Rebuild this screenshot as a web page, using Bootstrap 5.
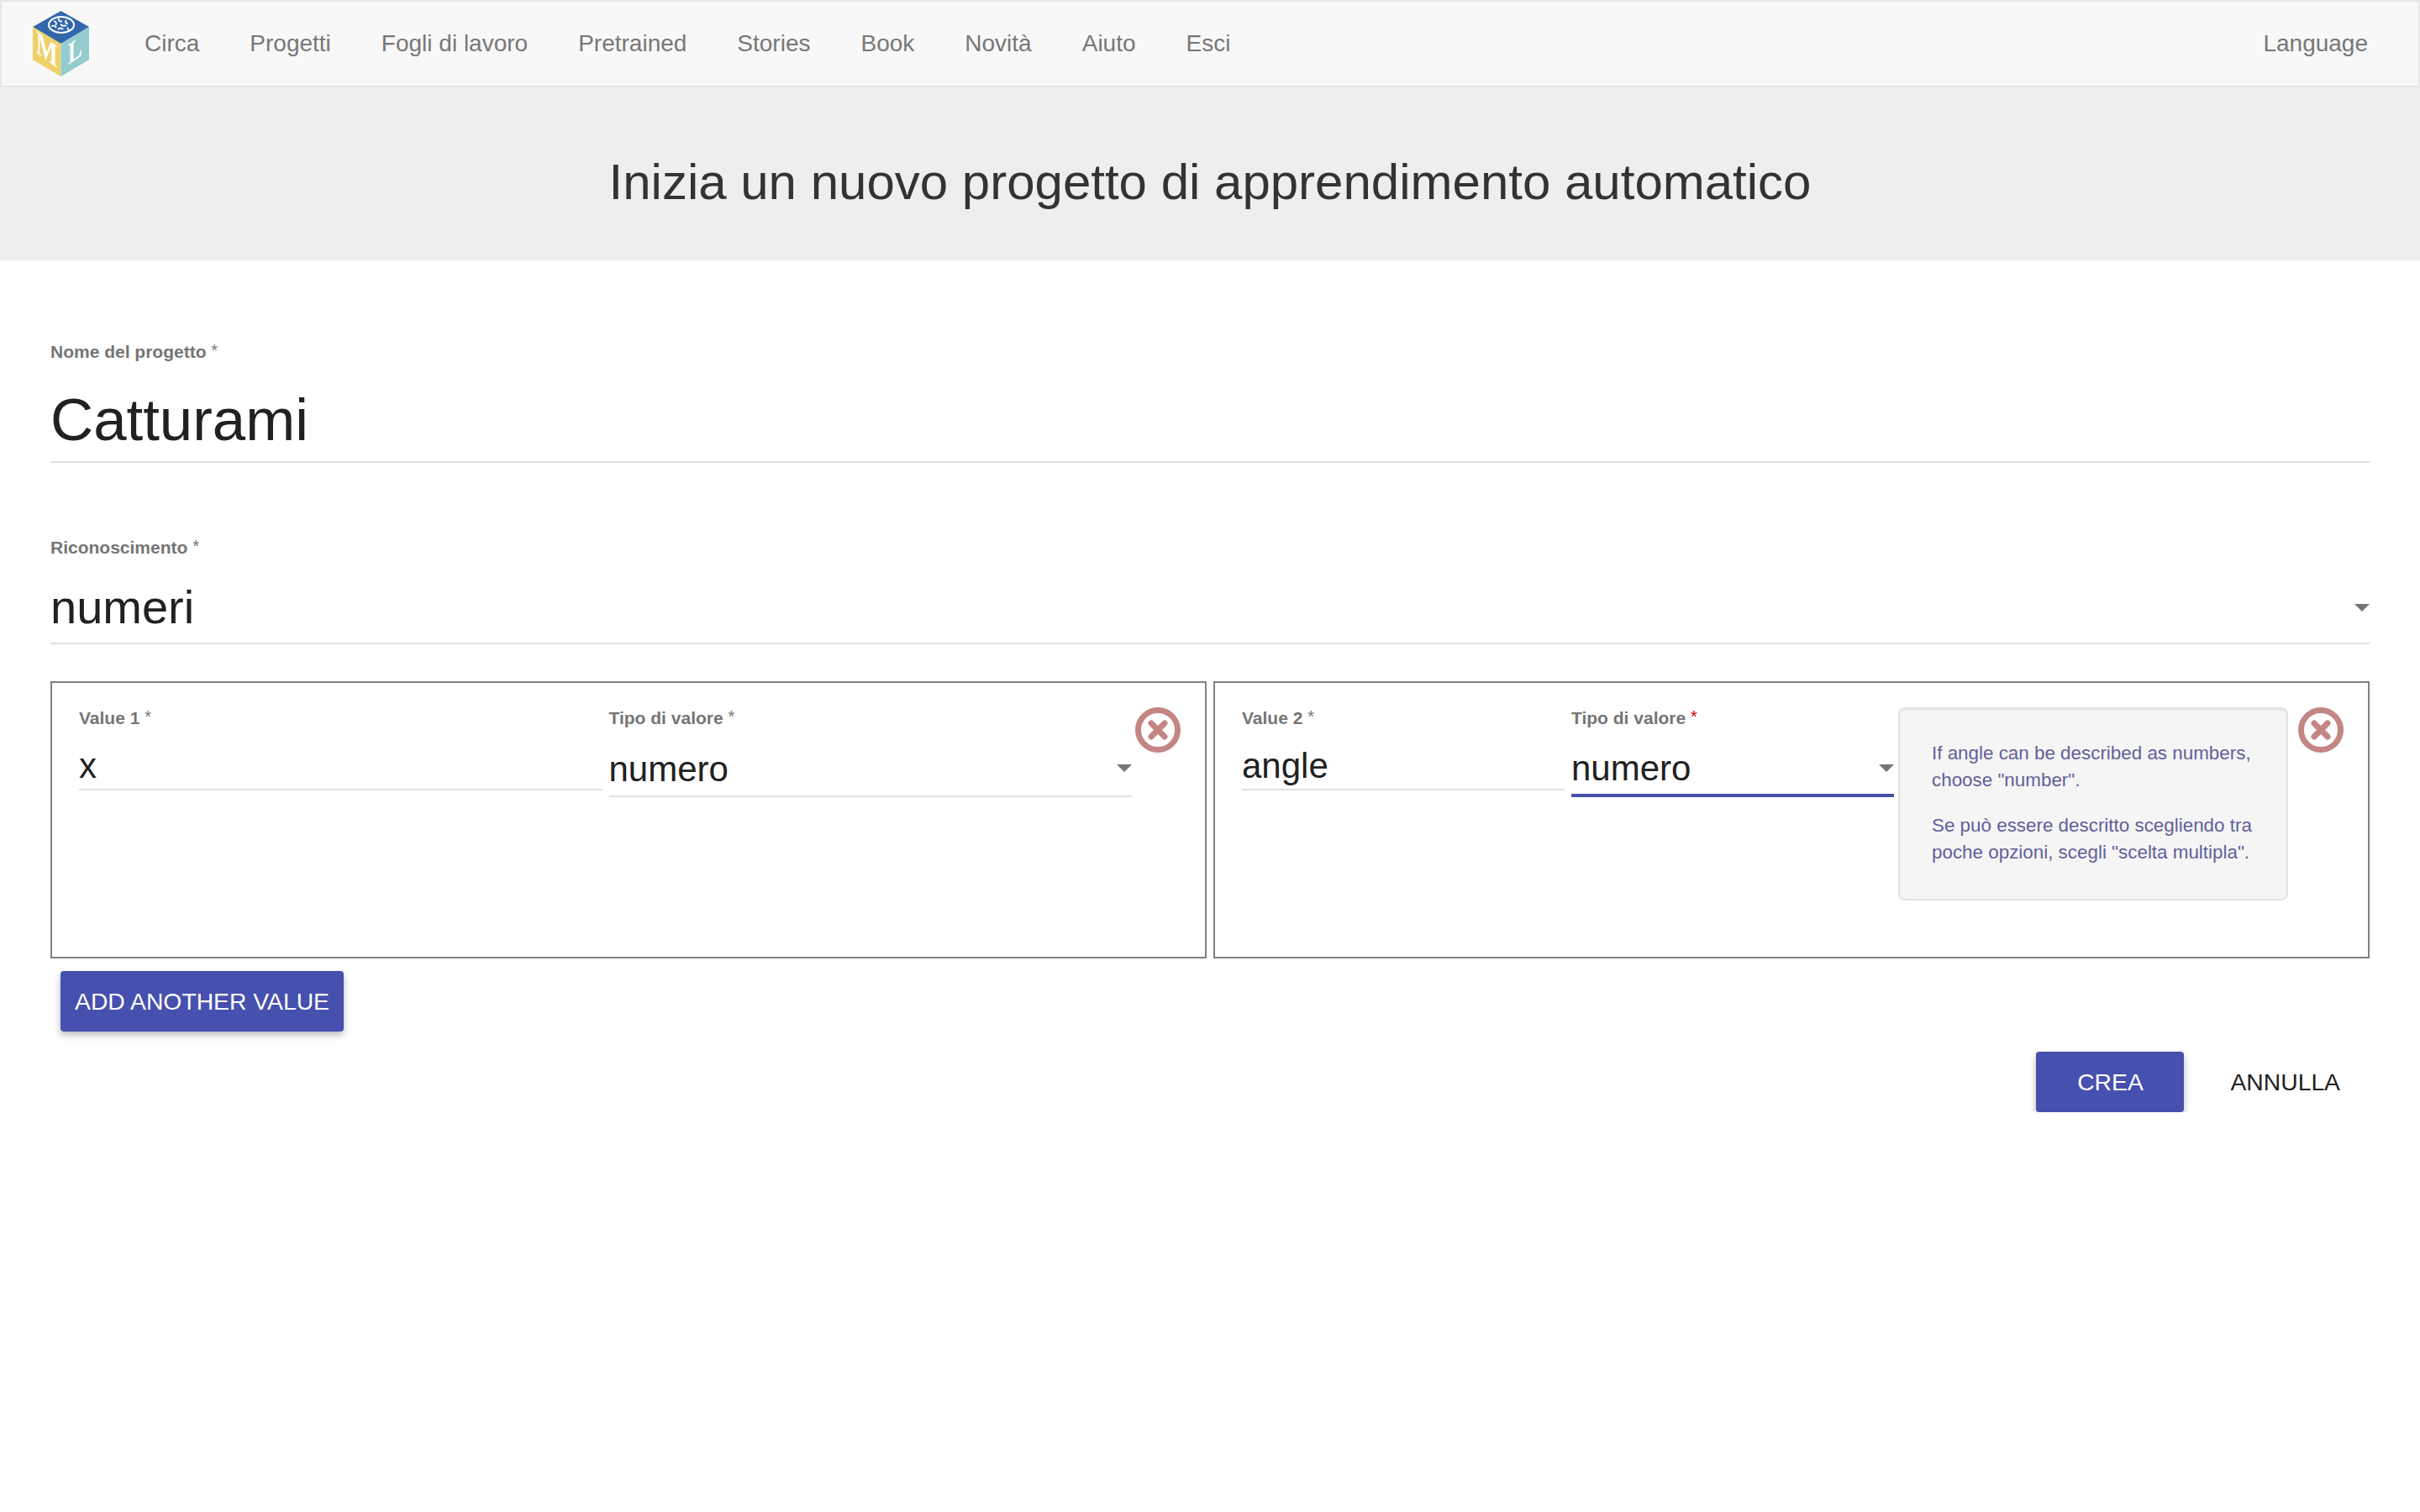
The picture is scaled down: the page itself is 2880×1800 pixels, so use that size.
<!DOCTYPE html>
<html lang="it">
<head>
  <meta charset="UTF-8" />
  <meta name="viewport" content="width=device-width, initial-scale=1.0"/>
  <title>Inizia un nuovo progetto</title>
  <link href="https://cdn.jsdelivr.net/npm/bootstrap@5.3.2/dist/css/bootstrap.min.css" rel="stylesheet"/>
  <style>
    body {
      font-family: "Liberation Sans", Arial, sans-serif;
      color: #212121;
      background: #fff;
    }
    .top-nav {
      background: #f8f8f8;
      border: 2px solid #e7e7e7;
      height: 104px;
      padding: 0 30px 0 37px;
    }
    .top-nav .navbar-brand { padding: 0; margin: 0 36px 0 0; line-height: 0; }
    .top-nav .nav-link {
      font-size: 28px;
      line-height: 40px;
      color: #777;
      padding: 0 30px !important;
    }
    .hero {
      background: #eee;
      height: 206px;
      padding-top: 20px;
    }
    .hero h1 {
      font-size: 60px;
      font-weight: 400;
      color: #333;
      margin: 0;
    }
    .form-area { padding: 96px 60px 0; }
    .fld-label {
      display: block;
      font-size: 21px;
      line-height: 26px;
      font-weight: 700;
      color: #757575;
      margin: 0;
    }
    .fld-label sup { font-size: 20px; top: -2px; vertical-align: baseline; position: relative; font-weight: 400; }
    .req-on sup { color: #d50000; }
    .fld-input, .fld-select {
      border: 0;
      border-bottom: 2px solid #e0e0e0;
      border-radius: 0;
      background: transparent;
      box-shadow: none;
      padding: 0;
      color: #212121;
      width: 100%;
      display: block;
    }
    .fld-big { font-size: 70.8px; height: 101px; margin-top: 18px; line-height: 90px; }
    .fld-main { font-size: 56px; height: 86px; }
    .fld-mid { font-size: 42px; height: 58px; margin-top: 15px; }
    .fld-sel-mid { font-size: 42px; height: 66px; }
    .fld-select { appearance: none; }
    .fld-focus { border-bottom: 4px solid #4650ae; }
    .sel-wrap { position: relative; }
    .sel-wrap-main { margin-top: 16px; }
    .sel-wrap-mid { margin-top: 15px; }
    .sel-arrow {
      position: absolute;
      right: 0;
      width: 0;
      height: 0;
      border-left: 9px solid transparent;
      border-right: 9px solid transparent;
      border-top: 9px solid #757575;
      pointer-events: none;
    }
    .sel-arrow-main { top: 38px; }
    .sel-arrow-mid { top: 27px; }
    .label-gap { margin-top: 88px; }
    .value-row { gap: 8px; margin-top: 44px; }
    .value-box {
      flex: 1 1 0;
      height: 330px;
      border: 2px solid #808080;
      padding: 29px 29px 0 32px;
      min-width: 0;
    }
    .value-fields { flex: 1 1 0; min-width: 0; gap: 8px; }
    .value-field { flex: 1 1 0; min-width: 0; }
    .hint-panel {
      width: 464px;
      height: 230px;
      flex: none;
      margin-left: 5px;
      background: #f5f5f5;
      border: 2px solid #e3e3e3;
      border-radius: 8px;
      box-shadow: inset 0 2px 2px rgba(0,0,0,.05);
      padding: 37px 30px 37px 38px;
      font-size: 22.4px;
      line-height: 32px;
      color: #625f99;
    }
    .hint-panel p { margin: 0 0 22px; }
    .close-btn {
      flex: none;
      width: 54px;
      height: 54px;
      padding: 0;
      border: 0;
      background: none;
      line-height: 0;
    }
    .close-last { margin-left: 12px; }
    .btn-indigo {
      background: #4650ae;
      color: #fff;
      border: 0;
      border-radius: 4px;
      height: 72px;
      font-size: 28.3px;
      box-shadow: 0 4px 8px rgba(0,0,0,.28);
    }
    .btn-indigo:hover { background: #3f479c; color: #fff; }
    .btn-add { width: 337px; margin: 15px 0 0 12px; padding: 0; }
    .btn-create { width: 176px; padding: 0; }
    .action-row { margin-top: 24px; }
    .btn-cancel {
      background: none;
      border: 0;
      color: #212121;
      height: 72px;
      font-size: 28.3px;
      padding: 0 35px 0 33px;
      margin-left: 22px;
    }
  </style>
</head>
<body>
  <!-- top bar -->
  <nav class="navbar navbar-expand top-nav">
    <a class="navbar-brand" href="#">
      <svg width="67" height="78" viewBox="0 0 67 78">
        <polygon points="33.5,0 67,19 33.5,39 0,19" fill="#3366aa"/>
        <polygon points="0,19 33.5,39 33.5,78 0,58" fill="#f0d068"/>
        <polygon points="67,19 33.5,39 33.5,78 67,58" fill="#94cbcf"/>
        <g fill="none" stroke="#fff">
          <ellipse cx="34" cy="16.5" rx="15" ry="9.5" stroke-width="2"/>
          <path d="M25 12c3 1 4 3 2 5M31 9c-1 3 2 4 4 3M40 11c-2 2-1 4 2 4M22 18c3-1 5 0 6 2M33 16c2 2 5 2 7 1M30 22c2-2 4-2 6 0M41 20c1 1 2 2 1 3" stroke-width="1.8"/>
        </g>
        <text transform="matrix(.8 .6 0 1.15 4 49)" font-family="Liberation Serif" font-weight="700" font-size="34" fill="#fff">M</text>
        <text transform="matrix(.8 -.55 0 1.15 42 64)" font-family="Liberation Serif" font-weight="700" font-size="31" fill="#fff">L</text>
      </svg>
    </a>
    <ul class="navbar-nav">
      <li class="nav-item"><a class="nav-link" href="#">Circa</a></li>
      <li class="nav-item"><a class="nav-link" href="#">Progetti</a></li>
      <li class="nav-item"><a class="nav-link" href="#">Fogli di lavoro</a></li>
      <li class="nav-item"><a class="nav-link" href="#">Pretrained</a></li>
      <li class="nav-item"><a class="nav-link" href="#">Stories</a></li>
      <li class="nav-item"><a class="nav-link" href="#">Book</a></li>
      <li class="nav-item"><a class="nav-link" href="#">Novità</a></li>
      <li class="nav-item"><a class="nav-link" href="#">Aiuto</a></li>
      <li class="nav-item"><a class="nav-link" href="#">Esci</a></li>
    </ul>
    <ul class="navbar-nav ms-auto">
      <li class="nav-item"><a class="nav-link" href="#">Language</a></li>
    </ul>
  </nav>

  <div class="hero d-flex align-items-center justify-content-center">
    <h1>Inizia un nuovo progetto di apprendimento automatico</h1>
  </div>

  <form class="form-area">
    <label class="fld-label">Nome del progetto <sup>*</sup></label>
    <input class="fld-input fld-big" type="text" value="Catturami"/>

    <label class="fld-label label-gap">Riconoscimento <sup>*</sup></label>
    <div class="sel-wrap sel-wrap-main">
      <select class="fld-select fld-main"><option>numeri</option></select>
      <span class="sel-arrow sel-arrow-main"></span>
    </div>

    <!-- value cards -->
    <div class="d-flex value-row">
      <div class="value-box d-flex">
        <div class="value-fields d-flex">
          <div class="value-field">
            <label class="fld-label">Value 1 <sup>*</sup></label>
            <input class="fld-input fld-mid" type="text" value="x"/>
          </div>
          <div class="value-field">
            <label class="fld-label">Tipo di valore <sup>*</sup></label>
            <div class="sel-wrap sel-wrap-mid">
              <select class="fld-select fld-sel-mid"><option>numero</option></select>
              <span class="sel-arrow sel-arrow-mid"></span>
            </div>
          </div>
        </div>
        <button type="button" class="close-btn ms-1" aria-label="Rimuovi">
          <svg width="54" height="54" viewBox="0 0 54 54"><circle cx="27" cy="27" r="23.5" fill="none" stroke="#c48585" stroke-width="7"/><path d="M19 19l16 16M35 19L19 35" stroke="#c48585" stroke-width="7" stroke-linecap="round"/></svg>
        </button>
      </div>
      <div class="value-box d-flex">
        <div class="value-fields d-flex">
          <div class="value-field">
            <label class="fld-label">Value 2 <sup>*</sup></label>
            <input class="fld-input fld-mid" type="text" value="angle"/>
          </div>
          <div class="value-field">
            <label class="fld-label req-on">Tipo di valore <sup>*</sup></label>
            <div class="sel-wrap sel-wrap-mid">
              <select class="fld-select fld-sel-mid fld-focus"><option>numero</option></select>
              <span class="sel-arrow sel-arrow-mid"></span>
            </div>
          </div>
        </div>
        <div class="hint-panel">
          <p>If angle can be described as numbers, choose "number".</p>
          <p>Se può essere descritto scegliendo tra poche opzioni, scegli "scelta multipla".</p>
        </div>
        <button type="button" class="close-btn close-last" aria-label="Rimuovi">
          <svg width="54" height="54" viewBox="0 0 54 54"><circle cx="27" cy="27" r="23.5" fill="none" stroke="#c48585" stroke-width="7"/><path d="M19 19l16 16M35 19L19 35" stroke="#c48585" stroke-width="7" stroke-linecap="round"/></svg>
        </button>
      </div>
    </div>

    <button type="button" class="btn btn-indigo btn-add d-block">ADD ANOTHER VALUE</button>
    <div class="d-flex justify-content-end action-row">
      <button type="button" class="btn btn-indigo btn-create">CREA</button>
      <button type="button" class="btn btn-cancel">ANNULLA</button>
    </div>
  </form>
</body>
</html>
